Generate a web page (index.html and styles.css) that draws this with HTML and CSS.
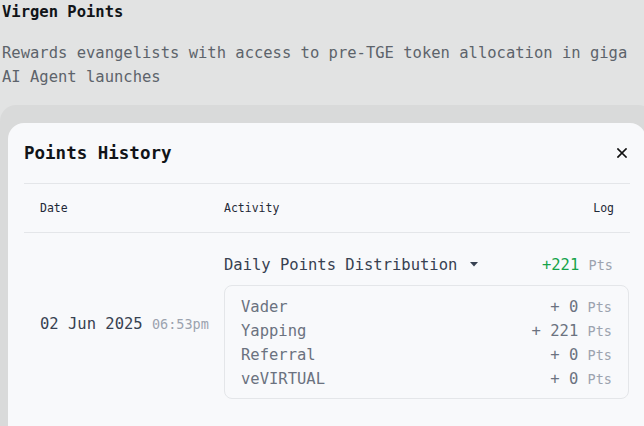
FILE: index.html
```html
<!DOCTYPE html>
<html lang="en">
<head>
<meta charset="utf-8">
<title>Virgen Points</title>
<link rel="stylesheet" href="styles.css">
</head>
<body>
<div class="page">
  <h1 class="title">Virgen Points</h1>
  <p class="desc">Rewards evangelists with access to pre-TGE token allocation in giga AI Agent launches</p>

  <div class="panel">
    <div class="card">
      <div class="card-head">
        <h2 class="card-title">Points History</h2>
        <button class="close" aria-label="Close">
          <svg width="10" height="10" viewBox="0 0 10 10"><path d="M1 1 L9 9 M9 1 L1 9" stroke="#111" stroke-width="1.7" stroke-linecap="square" fill="none"/></svg>
        </button>
      </div>

      <div class="thead">
        <div class="th th-date">Date</div>
        <div class="th th-act">Activity</div>
        <div class="th th-log">Log</div>
      </div>

      <div class="row">
        <div class="cell-date">02 Jun 2025 <span class="time">06:53pm</span></div>
        <div class="cell-act">
          <div class="summary">
            <span class="act-name">Daily Points Distribution
              <svg class="caret" width="8" height="5" viewBox="0 0 8 5"><path d="M0 0 H8 L4 4.5 Z" fill="#374151"/></svg>
            </span>
            <span class="total"><span class="plus">+221</span> <span class="pts">Pts</span></span>
          </div>
          <div class="breakdown">
            <div class="bd-row"><span>Vader</span><span class="amt">+ 0 <span class="pts">Pts</span></span></div>
            <div class="bd-row"><span>Yapping</span><span class="amt">+ 221 <span class="pts">Pts</span></span></div>
            <div class="bd-row"><span>Referral</span><span class="amt">+ 0 <span class="pts">Pts</span></span></div>
            <div class="bd-row"><span>veVIRTUAL</span><span class="amt">+ 0 <span class="pts">Pts</span></span></div>
          </div>
        </div>
      </div>
    </div>
  </div>
</div>
</body>
</html>
```

FILE: styles.css
```css
html, body {
  margin: 0;
  padding: 0;
  overflow: hidden;
  background: #e2e3e3;
}
body {
  font-family: "DejaVu Sans Mono", monospace;
  font-size: 15.5px;
  line-height: 24px;
  color: #374151;
}
.page {
  width: 660px;
  padding: 0 0 0 2px;
}
.title {
  margin: 0;
  font-size: 15.5px;
  line-height: 24px;
  font-weight: bold;
  color: #111418;
}
.desc {
  margin: 17px 0 0 0;
  max-width: 640px;
  color: #5d636b;
}
.panel {
  margin: 16px 0 0 -2px;
  background: #d9dada;
  border-radius: 16px 16px 0 0;
  padding: 18px 8px 0 8px;
  width: 638px;
}
.card {
  background: #f8f9fb;
  border-radius: 16px 16px 0 0;
  padding: 16px 16px 30px 16px;
}
.card-head {
  display: flex;
  align-items: center;
  justify-content: space-between;
  padding-bottom: 16px;
  border-bottom: 1px solid #e4e6e9;
}
.card-title {
  margin: 0;
  font-size: 17.5px;
  line-height: 28px;
  font-weight: bold;
  color: #111418;
}
.close {
  border: 0;
  background: none;
  padding: 0;
  margin-right: 3px;
  width: 10px;
  height: 10px;
  display: flex;
}
.thead {
  display: flex;
  align-items: center;
  height: 48px;
  border-bottom: 1px solid #e4e6e9;
  font-size: 11.5px;
  color: #1f2937;
}
.th { padding: 0 16px; }
.th-date { width: 152px; }
.th-act { flex: 1; }
.th-log { text-align: right; }
.row {
  display: flex;
  align-items: center;
}
.cell-date {
  width: 152px;
  padding: 0 16px;
  color: #374151;
  white-space: nowrap;
}
.time {
  font-size: 13.5px;
  color: #9ca3af;
}
.cell-act {
  flex: 1;
  padding: 20px 1px 16px 16px;
}
.summary {
  display: flex;
  justify-content: space-between;
  align-items: center;
  padding-right: 16px;
  margin-bottom: 8px;
}
.act-name { color: #374151; }
.caret {
  margin-left: 3px;
  vertical-align: middle;
  position: relative;
  top: -1px;
}
.plus { color: #16a34a; }
.pts {
  font-size: 13.5px;
  color: #9ca3af;
}
.breakdown {
  border: 1px solid #e4e6e9;
  border-radius: 8px;
  padding: 9px 16px 7px 16px;
  color: #6b7280;
}
.bd-row {
  display: flex;
  justify-content: space-between;
}
.amt { color: #6b7280; }
```
